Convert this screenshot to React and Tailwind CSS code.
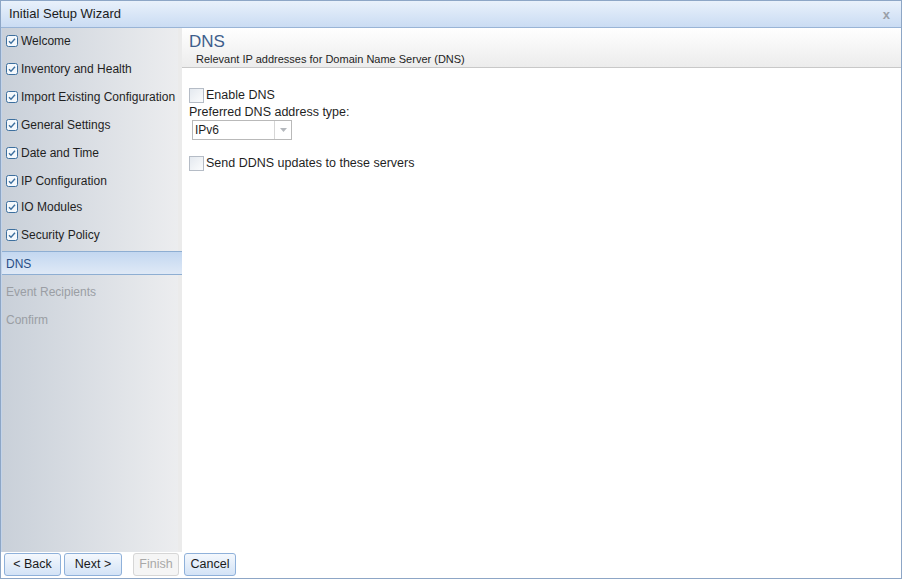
import React from "react";

const font = { fontFamily: '"Liberation Sans", Arial, sans-serif' };

function CheckIcon() {
  return (
    <svg width="12" height="12" viewBox="0 0 12 12" className="shrink-0">
      <rect x="0.5" y="0.5" width="11" height="11" rx="2" fill="#f4f8fc" stroke="#3d6f9e" />
      <path d="M3 6.2 L5 8.2 L9 3.8" fill="none" stroke="#3d6f9e" strokeWidth="1.4" />
    </svg>
  );
}

const done = [
  { t: "Welcome", h: "h-[28px]" },
  { t: "Inventory and Health", h: "h-[28px]" },
  { t: "Import Existing Configuration", h: "h-[28px]" },
  { t: "General Settings", h: "h-[28px]" },
  { t: "Date and Time", h: "h-[28px]" },
  { t: "IP Configuration", h: "h-[26px]" },
  { t: "IO Modules", h: "h-[28px]" },
  { t: "Security Policy", h: "h-[29px]" },
];

function Btn({ children, disabled, className = "" }) {
  return (
    <div
      className={
        "h-[23px] rounded-[3px] border flex items-center justify-center text-[12.5px] " +
        (disabled
          ? "border-[#d6d6d6] bg-[#f5f5f5] text-[#a8a8a8] "
          : "border-[#8fb1da] bg-gradient-to-b from-[#f4f8fd] to-[#d4e3f6] text-[#1a1a1a] ") +
        className
      }
    >
      {children}
    </div>
  );
}

function Box() {
  return (
    <div className="w-[15px] h-[15px] border border-[#b5bcc6] bg-gradient-to-br from-[#e4e9ef] to-[#fbfcfd] shrink-0" />
  );
}

export default function App() {
  return (
    <div style={font} className="w-[902px] h-[579px] border border-[#8da6c6] flex flex-col bg-white overflow-hidden">
      {/* title bar */}
      <div className="h-[27px] shrink-0 flex items-center justify-between pl-[8px] pr-[11px] bg-gradient-to-b from-[#e9f1fb] to-[#cadcf3] border-b border-[#99b4d6]">
        <span className="text-[13px] text-[#1b1b1b]">Initial Setup Wizard</span>
        <span className="text-[13px] font-bold text-[#9aa0a8] leading-none">x</span>
      </div>
      {/* body */}
      <div className="flex flex-1 min-h-0">
        {/* sidebar */}
        <div className="w-[181px] shrink-0 flex flex-col border-l border-[#c3d4ea] border-r-[4px] border-r-[#ebebeb] bg-gradient-to-r from-[#c9d0d9] to-[#ecedef]">
          {done.map((d) => (
            <div key={d.t} className={d.h + " flex items-start pt-[6px] pl-[4px] gap-[3px]"}>
              <div className="mt-[1px]">
                <CheckIcon />
              </div>
              <span className="text-[12px] leading-[14px] text-[#1f1f1f] whitespace-nowrap">{d.t}</span>
            </div>
          ))}
          <div className="h-[24px] -mr-[4px] flex items-center pl-[4px] pt-[1px] border-y border-[#8eaed2] bg-gradient-to-b from-[#c3d7f0] to-[#dfe9f6]">
            <span className="text-[12px] text-[#284e86]">DNS</span>
          </div>
          <div className="h-[28px] flex items-center pl-[4px] pt-[6px]">
            <span className="text-[12px] text-[#9a9ea4]">Event Recipients</span>
          </div>
          <div className="h-[28px] flex items-center pl-[4px] pt-[6px]">
            <span className="text-[12px] text-[#9a9ea4]">Confirm</span>
          </div>
        </div>
        {/* content */}
        <div className="flex-1 flex flex-col">
          <div className="h-[40px] shrink-0 bg-gradient-to-b from-white to-[#ececec] border-b border-[#c8c8c8] pl-[7px] flex flex-col">
            <div className="text-[17px] leading-[20px] text-[#3e5e8c] pt-[4px]">DNS</div>
            <div className="text-[11px] leading-[13px] text-[#1f1f1f] pl-[7px] pt-[1px]">
              Relevant IP addresses for Domain Name Server (DNS)
            </div>
          </div>
          <div className="pl-[7px] pt-[19px] flex flex-col text-[12.5px] text-[#1f1f1f]">
            <div className="flex items-center gap-[2px] h-[16px]">
              <Box />
              <span>Enable DNS</span>
            </div>
            <div className="h-[16px] flex items-center mt-[1px]">Preferred DNS address type:</div>
            <div className="mt-0 ml-[3px] w-[100px] h-[20px] border border-[#b9b9b9] flex bg-white">
              <div className="flex-1 flex items-center pl-[2px] text-[12px]">IPv6</div>
              <div className="w-[17px] border-l border-[#d6d6d6] flex items-center justify-center">
                <svg width="7" height="4" viewBox="0 0 7 4">
                  <path d="M0 0 L7 0 L3.5 4 Z" fill="#b4b8bd" />
                </svg>
              </div>
            </div>
            <div className="flex items-center gap-[2px] h-[16px] mt-[15px]">
              <Box />
              <span>Send DDNS updates to these servers</span>
            </div>
          </div>
        </div>
      </div>
      {/* footer */}
      <div className="h-[26px] shrink-0 flex items-start pt-[1px] pl-[3px] bg-white">
        <Btn className="w-[57px]">&lt; Back</Btn>
        <Btn className="w-[58px] ml-[3px]">Next &gt;</Btn>
        <Btn disabled className="w-[46px] ml-[11px]">Finish</Btn>
        <Btn className="w-[52px] ml-[5px]">Cancel</Btn>
      </div>
    </div>
  );
}
